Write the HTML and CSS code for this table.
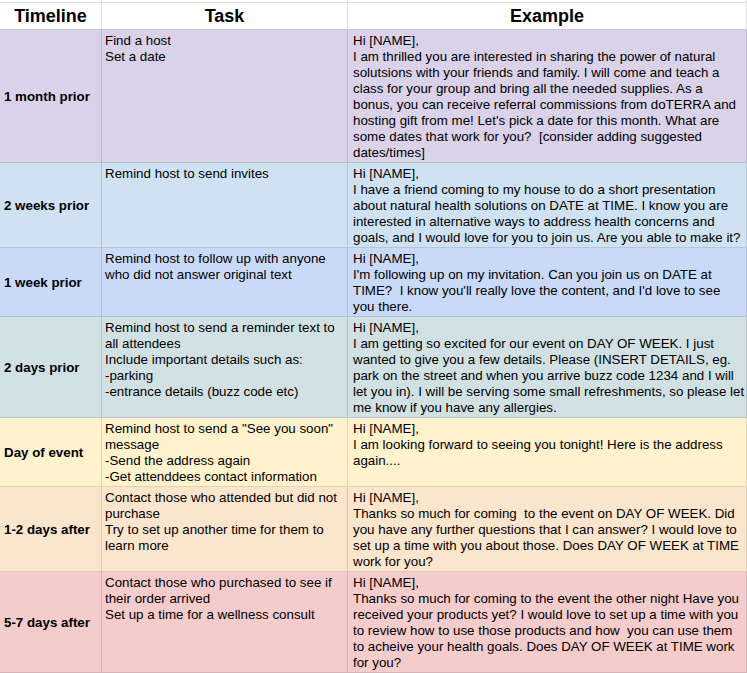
FILE: index.html
```html
<!DOCTYPE html>
<html lang="en">
<head>
<meta charset="utf-8">
<title>Host Timeline</title>
<link rel="stylesheet" href="styles.css">
</head>
<body>
<table class="sheet">
  <colgroup>
    <col class="c-time">
    <col class="c-task">
    <col class="c-example">
  </colgroup>
  <tr class="spacer"><td></td><td></td><td></td></tr>
  <tr class="head">
    <th>Timeline</th>
    <th>Task</th>
    <th>Example</th>
  </tr>
  <tr class="row lavender">
    <td class="time">1 month prior</td>
    <td>Find a host<br>Set a date</td>
    <td class="example">Hi [NAME],<br>I am thrilled you are interested in sharing the power of natural solutsions with your friends and family. I will come and teach a class for your group and bring all the needed supplies. As a bonus, you can receive referral commissions from doTERRA and hosting gift from me! Let's pick a date for this month. What are some dates that work for you?&nbsp; [consider adding suggested dates/times]</td>
  </tr>
  <tr class="row blue">
    <td class="time">2 weeks prior</td>
    <td>Remind host to send invites</td>
    <td class="example">Hi [NAME],<br>I have a friend coming to my house to do a short presentation about natural health solutions on DATE at TIME. I know you are interested in alternative ways to address health concerns and goals, and I would love for you to join us. Are you able to make it?</td>
  </tr>
  <tr class="row cornflower">
    <td class="time">1 week prior</td>
    <td>Remind host to follow up with anyone who did not answer original text</td>
    <td class="example">Hi [NAME],<br>I'm following up on my invitation. Can you join us on DATE at TIME?&nbsp; I know you'll really love the content, and I'd love to see you there.</td>
  </tr>
  <tr class="row cyan">
    <td class="time">2 days prior</td>
    <td>Remind host to send a reminder text to all attendees<br>Include important details such as:<br>-parking<br>-entrance details (buzz code etc)</td>
    <td class="example">Hi [NAME],<br>I am getting so excited for our event on DAY OF WEEK. I just wanted to give you a few details. Please (INSERT DETAILS, eg. park on the street and when you arrive buzz code 1234 and I will let you in). I will be serving some small refreshments, so please let me know if you have any allergies.</td>
  </tr>
  <tr class="row yellow">
    <td class="time">Day of event</td>
    <td>Remind host to send a "See you soon" message<br>-Send the address again<br>-Get attenddees contact information</td>
    <td class="example">Hi [NAME],<br>I am looking forward to seeing you tonight! Here is the address again....</td>
  </tr>
  <tr class="row orange">
    <td class="time">1-2 days after</td>
    <td>Contact those who attended but did not purchase<br>Try to set up another time for them to learn more</td>
    <td class="example">Hi [NAME],<br>Thanks so much for coming&nbsp; to the event on DAY OF WEEK. Did you have any further questions that I can answer? I would love to set up a time with you about those. Does DAY OF WEEK at TIME work for you?</td>
  </tr>
  <tr class="row red">
    <td class="time">5-7 days after</td>
    <td>Contact those who purchased to see if their order arrived<br>Set up a time for a wellness consult</td>
    <td class="example">Hi [NAME],<br>Thanks so much for coming to the event the other night Have you received your products yet? I would love to set up a time with you to review how to use those products and how&nbsp; you can use them to acheive your health goals. Does DAY OF WEEK at TIME work for you?</td>
  </tr>
</table>
</body>
</html>
```

FILE: styles.css
```css
html, body {
  margin: 0;
  padding: 0;
  background: #ffffff;
}

body {
  font-family: "Liberation Sans", Arial, sans-serif;
  color: #000000;
}

.sheet {
  width: 747px;
  table-layout: fixed;
  border-collapse: separate;
  border-spacing: 0;
}

.c-time { width: 102px; }
.c-task { width: 246px; }
.c-example { width: 399px; }

.sheet td,
.sheet th {
  border-right: 1px solid rgba(0, 0, 0, 0.12);
  border-bottom: 1px solid rgba(0, 0, 0, 0.12);
}

.spacer td {
  height: 2px;
  padding: 0;
  font-size: 0;
  line-height: 0;
  border-bottom-color: #e2e2e2;
  border-right-color: #e2e2e2;
}

.head th {
  font-size: 18px;
  font-weight: 700;
  line-height: 26px;
  height: 26px;
  padding: 0 3px;
  text-align: center;
  vertical-align: middle;
  white-space: nowrap;
  background: #ffffff;
  border-right-color: #e2e2e2;
  border-bottom-color: #c8c8c8;
}

.row td {
  font-size: 13.33px;
  line-height: 16px;
  padding: 3px 3px 1px;
  vertical-align: top;
  text-align: left;
}

.row td.time {
  font-weight: 700;
  vertical-align: middle;
  white-space: nowrap;
  padding-left: 4px;
}

.row td.example {
  padding-left: 5px;
  padding-right: 1px;
}

.lavender td { background: #d9d2e9; }
.blue td { background: #cfe2f3; }
.cornflower td { background: #c9daf8; }
.cyan td { background: #d0e0e3; }
.yellow td { background: #fff2cc; }
.orange td { background: #fce5cd; }
.red td { background: #f4cccc; }
```
